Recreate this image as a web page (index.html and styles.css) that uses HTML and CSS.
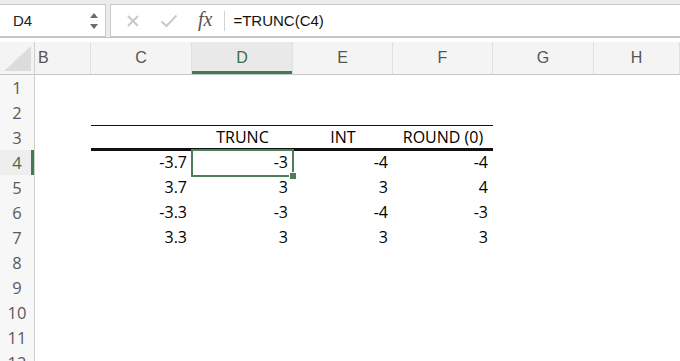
FILE: index.html
```html
<!DOCTYPE html>
<html lang="en">
<head>
    <meta charset="UTF-8">
    <title>TRUNC</title>
    <link rel="stylesheet" href="styles.css">
</head>
<body>
    <div class="toolbar">
        <div class="namebox">
            <span class="ref">D4</span>
            <svg class="spin" width="10" height="18" viewBox="0 0 10 18"><path d="M5 1 L9 6 L1 6 Z" fill="#6b6b6b"/><path d="M5 17 L9 12 L1 12 Z" fill="#6b6b6b"/></svg>
        </div>
        <div class="formula">
            <svg class="btn" width="14" height="14" viewBox="0 0 14 14"><path d="M2 2 L12 12 M12 2 L2 12" stroke="#c9c9c9" stroke-width="2" fill="none"/></svg>
            <svg class="btn ok" width="18" height="14" viewBox="0 0 18 14"><path d="M1.5 7.5 L6.5 12 L16.5 1.5" stroke="#c9c9c9" stroke-width="2" fill="none"/></svg>
            <span class="fx">fx</span>
            <span class="sep"></span>
            <span class="ftext">=TRUNC(C4)</span>
        </div>
    </div>
    <div class="sheet">
        <div class="row head">
            <div class="corner"><svg width="30" height="27" viewBox="0 0 30 27"><path d="M29 1 L29 26 L2 26 Z" fill="#dcdcdc"/></svg></div>
            <div class="ch left">B</div>
            <div class="ch">C</div>
            <div class="ch on">D</div>
            <div class="ch">E</div>
            <div class="ch">F</div>
            <div class="ch">G</div>
            <div class="ch">H</div>
        </div>
        <div class="row"><div class="rh">1</div></div>
        <div class="row"><div class="rh">2</div><div></div><div class="cell top"></div><div class="cell top"></div><div class="cell top"></div><div class="cell top"></div></div>
        <div class="row"><div class="rh">3</div><div></div><div class="cell th"></div><div class="cell th">TRUNC</div><div class="cell th">INT</div><div class="cell th">ROUND (0)</div></div>
        <div class="row"><div class="rh on">4</div><div></div><div class="cell">-3.7</div><div class="cell active">-3<span class="handle"></span></div><div class="cell">-4</div><div class="cell">-4</div></div>
        <div class="row"><div class="rh">5</div><div></div><div class="cell">3.7</div><div class="cell">3</div><div class="cell">3</div><div class="cell">4</div></div>
        <div class="row"><div class="rh">6</div><div></div><div class="cell">-3.3</div><div class="cell">-3</div><div class="cell">-4</div><div class="cell">-3</div></div>
        <div class="row"><div class="rh">7</div><div></div><div class="cell">3.3</div><div class="cell">3</div><div class="cell">3</div><div class="cell">3</div></div>
        <div class="row"><div class="rh">8</div></div>
        <div class="row"><div class="rh">9</div></div>
        <div class="row"><div class="rh">10</div></div>
        <div class="row"><div class="rh">11</div></div>
        <div class="row"><div class="rh">12</div></div>
    </div>
</body>
</html>
```
FILE: styles.css
```css
body { margin: 0; background: #fff; font-family: "Liberation Sans", Arial, sans-serif; overflow: hidden; }

.toolbar { display: flex; gap: 4px; height: 33px; padding-top: 4px; background: #ececec; border-bottom: 1px solid #c4c4c4; margin-bottom: 4px; }
.namebox { width: 106px; display: flex; align-items: center; justify-content: space-between; padding: 0 6px 0 13px; box-sizing: border-box; background: #fff; border-top: 1px solid #c8c8c8; border-right: 1px solid #c8c8c8; border-bottom: 1px solid #c8c8c8; }
.ref { font-size: 15px; color: #222; }
.formula { flex: 1; display: flex; align-items: center; background: #fff; border-top: 1px solid #c8c8c8; border-left: 1px solid #c8c8c8; border-bottom: 1px solid #c8c8c8; padding-left: 15px; }
.btn { margin-right: 20px; }
.fx { font-family: "Liberation Serif", serif; font-style: italic; font-size: 20px; color: #555; margin-top: -3px; }
.sep { width: 1px; height: 20px; background: #d4d4d4; margin: 0 8px 0 12px; }
.ftext { font-size: 15px; color: #111; }

.sheet { font-family: "Open Sans", sans-serif; font-size: 16px; }
.row { display: grid; grid-template-columns: 35px 56px 101px 101px 100px 100px 101px 86px; height: 25px; }
.row.head { height: 33px; background: #f4f4f4; box-sizing: border-box; border-bottom: 1px solid #c6c6c6; }
.corner { display: flex; align-items: flex-end; justify-content: flex-end; border-right: 1px solid #d0d0d0; padding: 0 2px 2px 0; }
.ch { font-family: "Liberation Sans", Arial, sans-serif; color: #555; display: flex; align-items: center; justify-content: center; border-right: 1px solid #e0e0e0; font-size: 16px; }
.ch.left { justify-content: flex-start; padding-left: 3px; }
.ch.on { background: #e9e9e9; color: #3c6e47; box-shadow: inset 0 -3px 0 #447a52; }

.rh { background: #f7f7f7; color: #5a5a5a; border-right: 1px solid #cfcfcf; border-bottom: 1px solid #e2e2e2; box-sizing: border-box; text-align: center; line-height: 25px; font-size: 16.5px; }
.rh.on { color: #3c6e47; background: #eeeeee; box-shadow: inset -3px 0 0 #447a52; }

.cell { text-align: right; padding-right: 5px; line-height: 25px; color: #000; position: relative; }
.cell.top { box-shadow: inset 0 -1px 0 #111; }
.cell.th { text-align: center; padding-right: 0; box-shadow: inset 0 -3px 0 #111; }
.cell.active::after { content: ""; position: absolute; left: -1px; top: -1px; right: -1px; bottom: -1px; border: 2px solid #4c7e59; }
.handle { position: absolute; right: -4px; bottom: -4px; width: 6px; height: 6px; background: #4c7e59; border: 1px solid #fff; z-index: 1; }
```
